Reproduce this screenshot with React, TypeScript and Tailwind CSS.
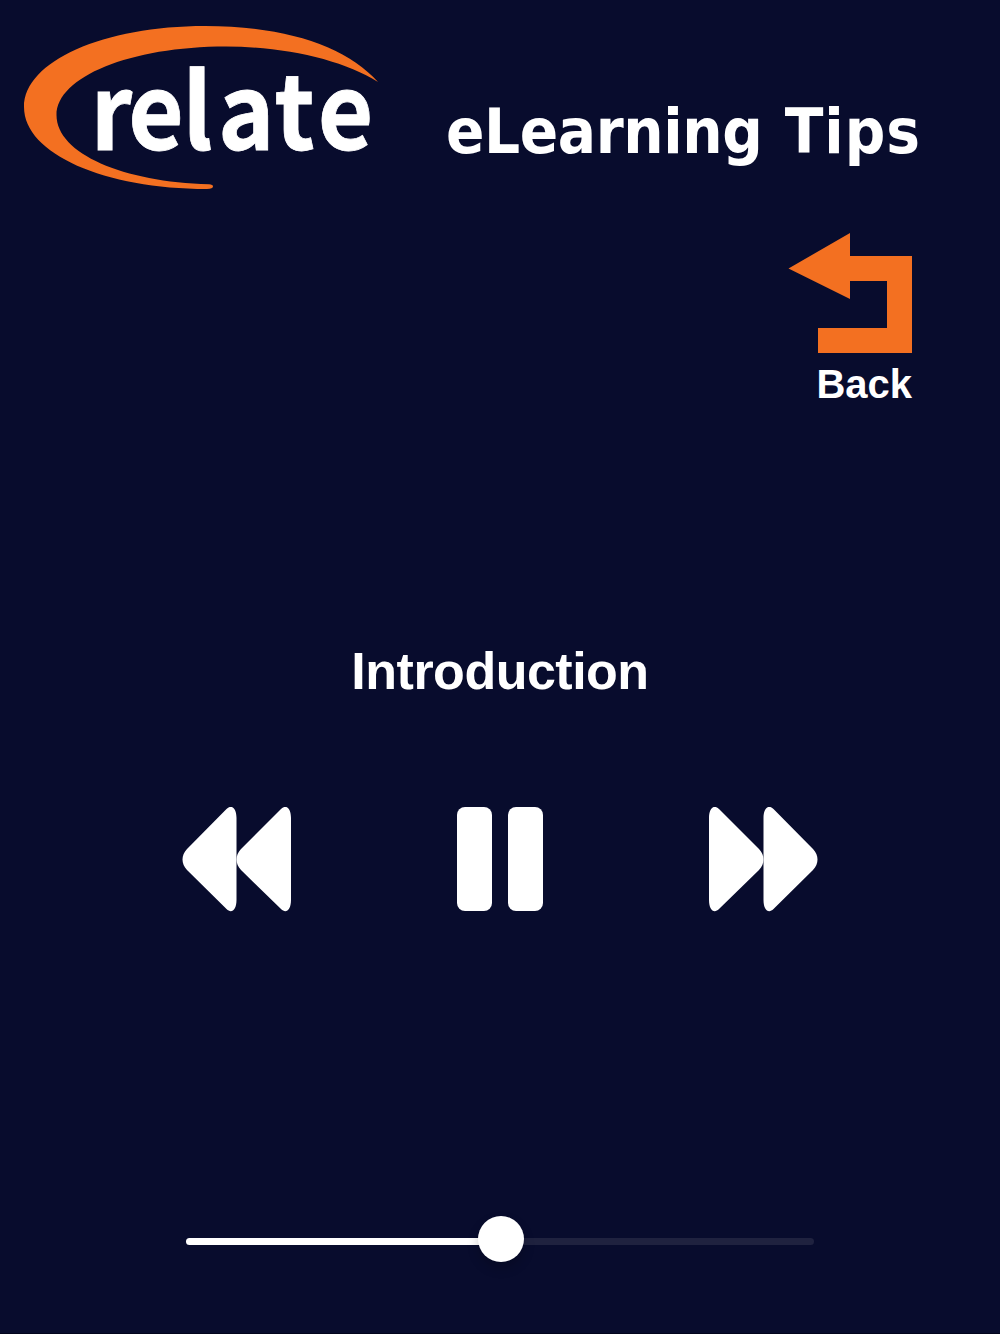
import { useState } from "react";

const RelateLogo = () => {
  return (
    <svg
      width="400"
      height="200"
      viewBox="0 0 400 200"
      className="shrink-0 overflow-visible"
    >
      <path
        d="M378 82C346 46 285 26 205 26C104 26 24 61 24 107C24 154 105 189 207 189Q213 188.500 213 186.500Q213 184.500 209 184.300C124 182 56.500 154 56.500 115C56.500 77 130 46.500 226 46.500C286 46.500 343 60 378 82Z"
        fill="#f37021"
      />
      {/* the wordmark is slightly condensed and kerned by hand */}
      <text
        transform="scale(0.92 1)"
        x="98.500 139.500 198.500 237 298.500 345.500"
        y="150.500"
        fill="white"
        stroke="white"
        strokeWidth="0.8"
        className="font-['Noto_Sans_CJK_SC',sans-serif] text-[104px] leading-none font-bold"
      >
        relate
      </text>
    </svg>
  );
};

const BackButton = () => {
  return (
    <button className="flex w-[126px] flex-col items-end">
      <svg width="126" height="124" viewBox="0 0 126 124">
        <path
          d="M0.500 38.500L62 3V26H124V123H30V98H99V51H62V69Z"
          fill="#f37021"
        />
      </svg>
      <span className="mt-2 mr-0.5 font-['Liberation_Sans',Arial,sans-serif] text-[40px] leading-[44px] font-bold">
        Back
      </span>
    </button>
  );
};

const SkipIcon = ({ className = "" }: { className?: string }) => {
  return (
    <svg
      width="109"
      height="105"
      viewBox="0 0 109 105"
      fill="white"
      className={className}
    >
      <path d="M0 11C0 1 5 -3 10 2L50 42C56 48 56 57 50 63L10 102C5 107 0 103 0 93Z" />
      <path d="M54.500 11C54.500 1 59.500 -3 64.500 2L104 42C110 48 110 57 104 63L64.500 102C59.500 107 54.500 103 54.500 93Z" />
    </svg>
  );
};

const App = () => {
  const [progress] = useState(50);

  return (
    <div className="flex h-[1334px] w-[1000px] flex-col overflow-hidden border-b border-[#02041c] bg-[#080c2d] text-white">
      <header className="flex h-[200px]">
        <RelateLogo />
        <h1 className="mt-[88px] ml-[46px] font-['DejaVu_Sans_Condensed','DejaVu_Sans',sans-serif] text-[63px] leading-[88px] font-bold font-stretch-condensed tracking-[-0.4px] whitespace-nowrap">
          eLearning <span className="ml-[3px] tracking-[1px]">Tips</span>
        </h1>
      </header>

      <div className="mt-[30px] flex justify-end pr-[86px]">
        <BackButton />
      </div>

      <h2 className="mt-[235px] text-center font-['Liberation_Sans',Arial,sans-serif] text-[52px] leading-[60px] font-bold tracking-[-0.5px]">
        Introduction
      </h2>

      <div className="mt-[106px] flex h-[105px] justify-between px-[182px]">
        <button aria-label="Rewind">
          <SkipIcon className="-scale-x-100" />
        </button>
        <button aria-label="Pause" className="flex gap-4">
          <span className="h-[104px] w-[35px] rounded-lg bg-white" />
          <span className="h-[104px] w-[35px] rounded-lg bg-white" />
        </button>
        <button aria-label="Fast forward">
          <SkipIcon />
        </button>
      </div>

      <div className="mt-[304px] ml-[186px] flex h-[47px] w-[628px] items-center">
        <div className="relative mt-1 h-[7px] w-full rounded-full bg-[#1f223f]">
          <div
            className="h-full rounded-full bg-white"
            style={{ width: `${progress}%` }}
          />
          <div
            className="absolute -top-[22px] -ml-[22px] size-[46px] rounded-full bg-white shadow-[0_6px_12px_rgba(0,0,0,0.2)]"
            style={{ left: `${progress}%` }}
          />
        </div>
      </div>
    </div>
  );
};

export default App;
